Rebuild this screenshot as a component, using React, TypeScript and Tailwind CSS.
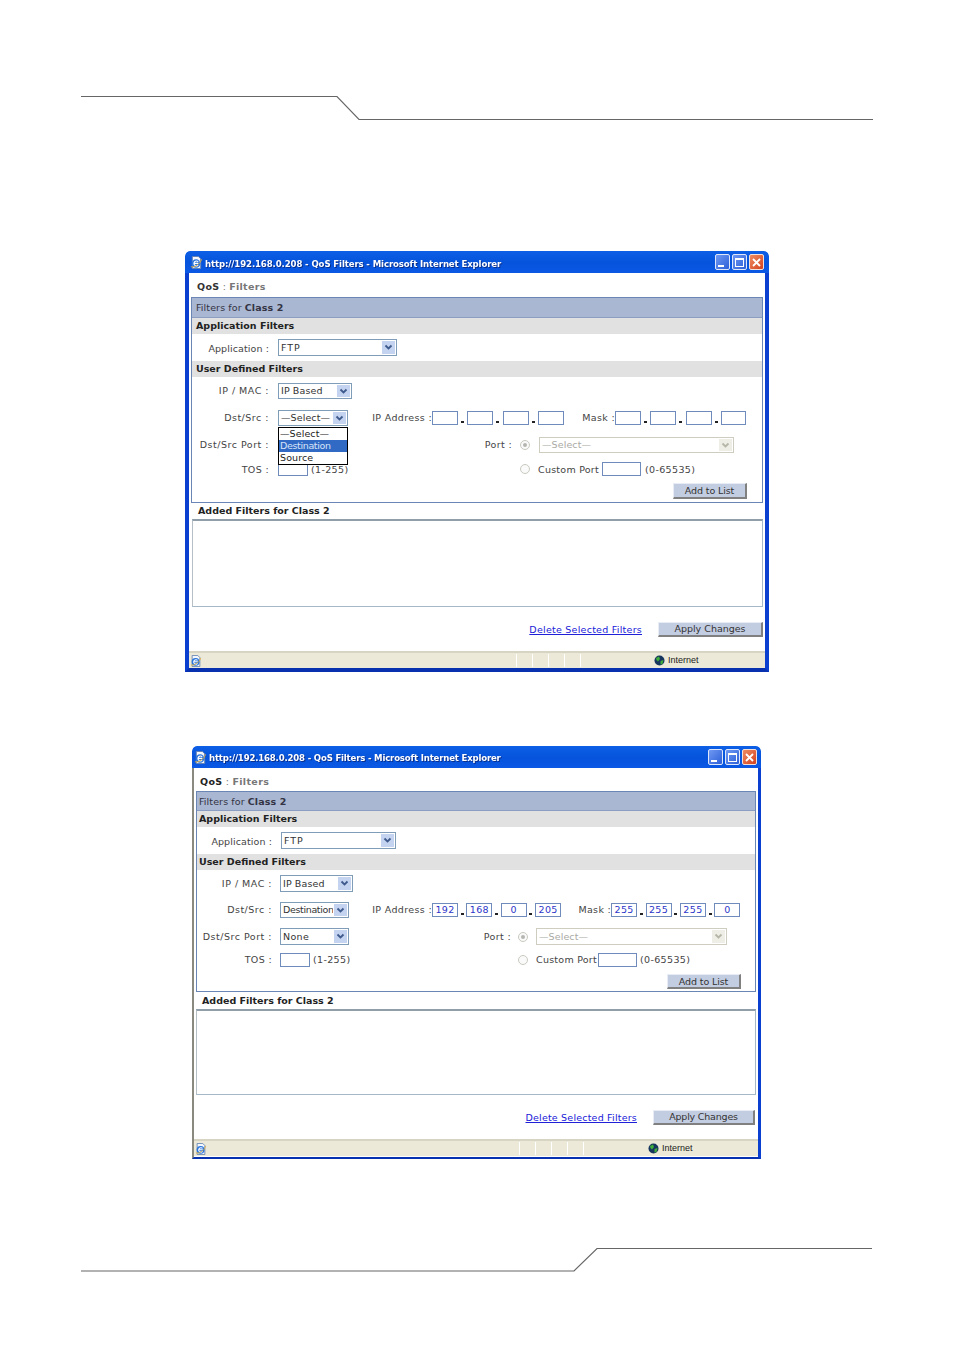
import type { ReactNode } from "react";

const font = "font-['DejaVu_Sans',sans-serif]";

function Arrow({ disabled }: { disabled?: boolean }) {
  return (
    <span className={`flex w-[13px] shrink-0 items-center justify-center self-stretch m-[1px] ${disabled ? "bg-[#eeeee6]" : "bg-[#c3d3f0]"}`}>
      <svg width="9" height="7" viewBox="0 0 9 7">
        <path d="M1.5 1.5 L4.5 4.5 L7.5 1.5" fill="none" stroke={disabled ? "#b5b5a8" : "#3f5a8c"} strokeWidth="1.8" />
      </svg>
    </span>
  );
}

function Sel({ value, className, disabled, textClass = "" }: { value: string; className: string; disabled?: boolean; textClass?: string }) {
  return (
    <span className={`flex items-center border bg-white ${disabled ? "border-[#cfcdc0] bg-[#f9f9f5] text-[#aaaaa5]" : "border-[#7f9db9] text-[#333]"} ${className}`}>
      <span className={`flex-1 pl-[2px] pt-[1px] whitespace-nowrap overflow-hidden ${textClass}`}>{value}</span>
      <Arrow disabled={disabled} />
    </span>
  );
}

function Box({ value, className }: { value?: string; className: string }) {
  return (
    <span className={`flex items-center justify-center border border-[#6f8bbb] bg-white pt-[1px] text-[#2b36c9] ${className}`}>{value}</span>
  );
}

function Label({ children, className }: { children: ReactNode; className: string }) {
  return <span className={`shrink-0 pt-[1px] text-right whitespace-nowrap text-[#444] ${className}`}>{children}</span>;
}

function Dot({ className }: { className: string }) {
  return (
    <span className={`flex shrink-0 items-end justify-center pb-[3px] self-stretch ${className}`}>
      <span className="block h-[2px] w-[3px] bg-[#222]" />
    </span>
  );
}

function Radio({ className, checked }: { className: string; checked?: boolean }) {
  return (
    <span className={`flex h-[10px] w-[10px] shrink-0 items-center justify-center rounded-full border border-[#c9c9c0] bg-[#fafafa] ${className}`}>
      {checked && <span className="block h-[4px] w-[4px] rounded-full bg-[#b5b5b0]" />}
    </span>
  );
}

function Btn({ children, className }: { children: ReactNode; className: string }) {
  return (
    <span className={`flex items-center justify-center bg-[#c3cde2] pt-[1px] text-[#333] border-b-2 border-r-2 border-b-[#808080] border-r-[#808080] border-t border-l border-t-[#e8ecf4] border-l-[#e8ecf4] ${className}`}>
      {children}
    </span>
  );
}

function Gray({ children, className }: { children: ReactNode; className: string }) {
  return <div className={`flex items-center bg-[#e1e1e1] pt-[1px] font-bold text-[#222] whitespace-nowrap ${className}`}>{children}</div>;
}

function IeIcon({ size }: { size: number }) {
  return (
    <svg width={size} height={size} viewBox="0 0 14 14" className="shrink-0">
      <path d="M2.5 0.5 H9 L11.5 3 V13.5 H2.5 Z" fill="#f4f7fc" stroke="#5f7eb0" />
      <circle cx="6.5" cy="8" r="4.6" fill="#2a74dc" />
      <path d="M4.2 8 H9 M8.8 6.3 A2.6 2.6 0 1 0 8.8 9.8" fill="none" stroke="#fff" strokeWidth="1.2" />
      <path d="M1 11.5 C4 13 11 9 12.5 3.5" fill="none" stroke="#e8b030" strokeWidth="0.9" />
    </svg>
  );
}

function Globe() {
  return (
    <svg width="11" height="11" viewBox="0 0 11 11" className="shrink-0">
      <circle cx="5.5" cy="5.5" r="5" fill="#16365f" />
      <path d="M2 3 L5 1.5 L6 4 L4 6.5 L2.5 5 Z M6.5 6 L9.5 5 L8.5 9 L6.5 9.5 Z" fill="#3fae3a" />
    </svg>
  );
}

function TitleBar({ title, className, btnMr, textClass }: { title: string; className: string; btnMr: string; textClass: string }) {
  return (
    <div className={`flex h-[22px] shrink-0 items-center rounded-t-[5px] bg-gradient-to-b from-[#0d5fe6] via-[#0654dc] to-[#0a58e4] ${className}`}>
      <IeIcon size={13} />
      <span className={`ml-[2px] flex-1 whitespace-nowrap font-bold font-stretch-condensed text-white [text-shadow:1px_1px_0_#0b2f8a] ${textClass}`}>{title}</span>
      <span className={`flex gap-[2px] ${btnMr}`}>
        <span className="flex h-[16px] w-[15px] items-end rounded-[2px] border border-[#dfe8fb] bg-gradient-to-br from-[#6f98f2] to-[#2d5fd8] p-[2px]">
          <span className="block h-[2px] w-[6px] bg-white" />
        </span>
        <span className="flex h-[16px] w-[15px] items-center justify-center rounded-[2px] border border-[#dfe8fb] bg-gradient-to-br from-[#6f98f2] to-[#2d5fd8]">
          <span className="block h-[9px] w-[9px] border border-t-2 border-white" />
        </span>
        <span className="flex h-[16px] w-[15px] items-center justify-center rounded-[2px] border border-[#f3e0d8] bg-gradient-to-br from-[#ee8a60] to-[#d2401c]">
          <svg width="9" height="9" viewBox="0 0 9 9">
            <path d="M1 1 L8 8 M8 1 L1 8" stroke="#fff" strokeWidth="1.8" />
          </svg>
        </span>
      </span>
    </div>
  );
}

function StatusBar({ gapClass, textClass }: { gapClass: string; textClass: string }) {
  return (
    <div className="flex h-[17px] shrink-0 items-center border-t-2 border-t-[#d8d4c4] bg-[#ece9d8] pl-[1px]">
      <IeIcon size={12} />
      <span className={`flex ${gapClass}`}>
        <span className="block h-[13px] w-[16px] border-l border-white" />
        <span className="block h-[13px] w-[16px] border-l border-white" />
        <span className="block h-[13px] w-[16px] border-l border-white" />
        <span className="block h-[13px] w-[16px] border-l border-white" />
        <span className="block h-[13px] w-[16px] border-l border-white" />
      </span>
      <span className={`flex items-center ${textClass}`}>
        <Globe />
        <span className="ml-[3px] text-[9px] text-[#222] font-['Liberation_Sans',sans-serif]">Internet</span>
      </span>
    </div>
  );
}

function ListBox({ className }: { className: string }) {
  return <div className={`shrink-0 border border-[#a5b8c8] border-t-2 border-t-[#8f9ea8] border-l-[#b5bfc5] bg-white ${className}`} />;
}

function FirstWindow() {
  const row = "flex text-[9.5px] tracking-[0.35px]";
  return (
    <div className={`ml-[185px] mt-[126px] flex h-[421px] w-[584px] flex-col overflow-hidden rounded-t-[5px] blur-[0.3px] ${font}`}>
      <TitleBar title="http://192.168.0.208 - QoS Filters - Microsoft Internet Explorer" className="pl-[5px]" btnMr="mr-[5px]" textClass="pt-[4px] text-[9.5px] tracking-[-0.1px]" />
      <div className="flex min-h-0 flex-1 flex-col border-x-4 border-b-4 border-x-[#0a3fd0] border-b-[#0831b0] bg-white">
        <div className="flex h-[24px] shrink-0 items-center pl-[8px] pt-[5px] text-[9.5px] tracking-[0.3px] text-[#777]">
          <b className="text-[#333]">QoS</b>&nbsp;: <b className="ml-[3px] font-bold">Filters</b>
        </div>
        <div className="mx-[2px] h-[206px] shrink-0 border border-[#6a86b5]">
          <div className="flex h-[20px] items-center bg-[#a9b7d2] pl-[4px] pt-[2px] text-[9.5px] tracking-[0.1px] text-[#334] border-b border-b-[#8b9dc0]">
            Filters for&nbsp;<b>Class 2</b>
          </div>
          <Gray className="h-[16px] pl-[4px] text-[9.5px]">Application Filters</Gray>
          <div className={`${row} h-[27px] items-start pt-[5px]`}>
            <Label className="w-[77px] leading-[17px] tracking-[0.1px]">Application :</Label>
            <Sel value="FTP" textClass="tracking-[1px]" className="ml-[9px] h-[17px] w-[119px]" />
          </div>
          <Gray className="h-[16px] pl-[4px] text-[9.5px]">User Defined Filters</Gray>
          <div className={`${row} mt-[6px] h-[16px] items-center`}>
            <Label className="w-[77px] tracking-[0.5px]">IP / MAC :</Label>
            <Sel value="IP Based" textClass="tracking-[0.1px]" className="ml-[9px] h-[16px] w-[74px]" />
          </div>
          <div className={`${row} mt-[11px] h-[16px] items-center`}>
            <div className="flex w-[177px] shrink-0 items-center">
              <Label className="w-[77px] tracking-[0.5px]">Dst/Src :</Label>
              <div className="relative ml-[9px]">
                <Sel value="—Select—" textClass="tracking-[0.1px]" className="h-[16px] w-[70px]" />
                <div className="absolute left-0 top-[17px] z-10 w-[70px] border border-black bg-white text-[9.5px] leading-[12px] text-[#222]">
                  <div className="pl-[1px] tracking-[0.1px]">—Select—</div>
                  <div className="bg-[#316ac5] pl-[1px] tracking-[-0.35px] text-[#d8e4f8]">Destination</div>
                  <div className="pl-[1px] tracking-[0.1px]">Source</div>
                </div>
              </div>
            </div>
            <Label className="w-[63px] text-left">IP Address :</Label>
            <Box className="h-[14px] w-[26px] shrink-0" />
            <Dot className="w-[9.33px]" />
            <Box className="h-[14px] w-[26px] shrink-0" />
            <Dot className="w-[9.33px]" />
            <Box className="h-[14px] w-[26px] shrink-0" />
            <Dot className="w-[9.33px]" />
            <Box className="h-[14px] w-[26px] shrink-0" />
            <Label className="ml-[15px] w-[36px] text-left">Mask :</Label>
            <Box className="h-[14px] w-[26px] shrink-0" />
            <Dot className="w-[9.33px]" />
            <Box className="h-[14px] w-[26px] shrink-0" />
            <Dot className="w-[9.33px]" />
            <Box className="h-[14px] w-[26px] shrink-0" />
            <Dot className="w-[9.33px]" />
            <Box className="h-[14px] w-[25px] shrink-0" />
          </div>
          <div className={`${row} mt-[11px] h-[16px] items-center`}>
            <div className="flex w-[179px] shrink-0 items-center">
              <Label className="w-[77px] tracking-[0.5px]">Dst/Src Port :</Label>
            </div>
            <Label className="w-[141px]">Port :</Label>
            <Radio checked className="ml-[8px]" />
            <Sel disabled value="—Select—" textClass="tracking-[0.1px]" className="ml-[9px] h-[16px] w-[195px]" />
          </div>
          <div className={`${row} mt-[9px] h-[14px] items-end`}>
            <div className="flex w-[179px] shrink-0 items-end">
              <Label className="w-[77px] leading-[12px]">TOS :</Label>
              <Box className="ml-[9px] h-[12px] w-[30px] shrink-0" />
              <span className="ml-[3px] pt-[1px] leading-[12px] whitespace-nowrap text-[#444]">(1-255)</span>
            </div>
            <span className="w-[141px] shrink-0" />
            <Radio className="mb-[2px] ml-[8px]" />
            <span className="ml-[8px] w-[64px] shrink-0 leading-[13px] whitespace-nowrap tracking-[0.25px] text-[#444]">Custom Port</span>
            <Box className="h-[14px] w-[39px] shrink-0" />
            <span className="ml-[4px] leading-[13px] whitespace-nowrap text-[#444]">(0-65535)</span>
          </div>
          <div className={`${row} mt-[7px] h-[16px] pl-[481px]`}>
            <Btn className="w-[74px] tracking-[-0.1px]"><span className="mt-[1px]">Add to List</span></Btn>
          </div>
        </div>
        <div className="flex h-[16px] shrink-0 items-center pl-[9px] pt-[1px] text-[9.5px] font-bold text-[#222]">Added Filters for Class 2</div>
        <ListBox className="ml-[3px] mr-[2px] h-[88px]" />
        <div className="flex h-[44px] shrink-0 items-start justify-end gap-[16px] pr-[2px] pt-[15px] text-[9.5px] tracking-[0.25px]">
          <span className="leading-[15px] text-[#2020d8] underline">Delete Selected Filters</span>
          <Btn className="h-[15px] w-[105px] tracking-[0px]">Apply Changes</Btn>
        </div>
        <StatusBar gapClass="ml-[314px]" textClass="ml-[58px]" />
      </div>
    </div>
  );
}

function SecondWindow() {
  const row = "flex text-[9.5px] tracking-[0.35px]";
  return (
    <div className={`ml-[192px] mt-[74px] flex h-[413px] w-[569px] flex-col overflow-hidden rounded-t-[5px] blur-[0.3px] ${font}`}>
      <TitleBar title="http://192.168.0.208 - QoS Filters - Microsoft Internet Explorer" className="pl-[2px]" btnMr="mr-[4px]" textClass="pt-[3px] text-[9.5px] tracking-[-0.17px]" />
      <div className="flex min-h-0 flex-1 flex-col border-l-2 border-r-[3px] border-b-2 border-l-[#8a8a80] border-r-[#0a3fd0] border-b-[#0831b0] bg-white">
        <div className="flex h-[23px] shrink-0 items-center pl-[6px] pt-[5px] text-[9.5px] tracking-[0.35px] text-[#777]">
          <b className="text-[#222]">QoS</b>&nbsp;: <b className="ml-[3px] font-bold">Filters</b>
        </div>
        <div className="mx-[2px] h-[201px] shrink-0 border border-[#6a86b5]">
          <div className="flex h-[19px] items-center bg-[#a9b7d2] pl-[2px] pt-[2px] text-[9.5px] tracking-[0.1px] text-[#334] border-b border-b-[#8b9dc0]">
            Filters for&nbsp;<b>Class 2</b>
          </div>
          <Gray className="h-[16px] pl-[2px] text-[9.5px]">Application Filters</Gray>
          <div className={`${row} h-[27px] items-start pt-[5px]`}>
            <Label className="w-[75px] leading-[17px] tracking-[0.1px]">Application :</Label>
            <Sel value="FTP" textClass="tracking-[1px]" className="ml-[9px] h-[17px] w-[115px]" />
          </div>
          <Gray className="h-[16px] pl-[2px] text-[9.5px]">User Defined Filters</Gray>
          <div className={`${row} mt-[5px] h-[17px] items-center`}>
            <Label className="w-[75px] tracking-[0.5px]">IP / MAC :</Label>
            <Sel value="IP Based" textClass="tracking-[0.1px]" className="ml-[8px] h-[17px] w-[73px]" />
          </div>
          <div className={`${row} mt-[10px] h-[16px] items-center`}>
            <div className="flex w-[175px] shrink-0 items-center">
              <Label className="w-[75px] tracking-[0.5px]">Dst/Src :</Label>
              <Sel value="Destination" textClass="tracking-[-0.35px]" className="ml-[8px] h-[16px] w-[69px]" />
            </div>
            <Label className="w-[60px] text-left">IP Address :</Label>
            <Box value="192" className="h-[14px] w-[26px] shrink-0" />
            <Dot className="w-[8.4px]" />
            <Box value="168" className="h-[14px] w-[26px] shrink-0" />
            <Dot className="w-[8.4px]" />
            <Box value="0" className="h-[14px] w-[26px] shrink-0" />
            <Dot className="w-[8.4px]" />
            <Box value="205" className="h-[14px] w-[26px] shrink-0" />
            <Label className="ml-[17px] w-[33px] text-left">Mask :</Label>
            <Box value="255" className="h-[14px] w-[26px] shrink-0" />
            <Dot className="w-[8.4px]" />
            <Box value="255" className="h-[14px] w-[26px] shrink-0" />
            <Dot className="w-[8.4px]" />
            <Box value="255" className="h-[14px] w-[26px] shrink-0" />
            <Dot className="w-[8.4px]" />
            <Box value="0" className="h-[14px] w-[26px] shrink-0" />
          </div>
          <div className={`${row} mt-[10px] h-[17px] items-center`}>
            <div className="flex w-[175px] shrink-0 items-center">
              <Label className="w-[75px] tracking-[0.5px]">Dst/Src Port :</Label>
              <Sel value="None" className="ml-[8px] h-[17px] w-[69px]" />
            </div>
            <Label className="w-[139px]">Port :</Label>
            <Radio checked className="ml-[7px]" />
            <Sel disabled value="—Select—" textClass="tracking-[0.1px]" className="ml-[8px] h-[17px] w-[191px]" />
          </div>
          <div className={`${row} mt-[8px] h-[14px] items-center`}>
            <div className="flex w-[175px] shrink-0 items-center">
              <Label className="w-[75px]">TOS :</Label>
              <Box className="ml-[8px] h-[14px] w-[30px] shrink-0" />
              <span className="ml-[3px] pt-[1px] whitespace-nowrap text-[#444]">(1-255)</span>
            </div>
            <span className="w-[139px] shrink-0" />
            <Radio className="ml-[7px]" />
            <span className="ml-[8px] w-[62px] shrink-0 pt-[1px] whitespace-nowrap tracking-[0.25px] text-[#444]">Custom Port</span>
            <Box className="h-[14px] w-[39px] shrink-0" />
            <span className="ml-[3px] pt-[1px] whitespace-nowrap text-[#444]">(0-65535)</span>
          </div>
          <div className={`${row} mt-[7px] h-[15px] pl-[470px]`}>
            <Btn className="w-[74px] tracking-[-0.1px]"><span className="mt-[1px]">Add to List</span></Btn>
          </div>
        </div>
        <div className="flex h-[17px] shrink-0 items-center pl-[8px] pt-[1px] text-[9.5px] font-bold text-[#222]">Added Filters for Class 2</div>
        <ListBox className="mx-[2px] h-[86px]" />
        <div className="flex h-[44px] shrink-0 items-start justify-end gap-[16px] pr-[3px] pt-[15px] text-[9.5px] tracking-[0.2px]">
          <span className="leading-[15px] text-[#2020d8] underline">Delete Selected Filters</span>
          <Btn className="h-[15px] w-[102px] tracking-[-0.2px]">Apply Changes</Btn>
        </div>
        <StatusBar gapClass="ml-[312px]" textClass="ml-[49px]" />
      </div>
    </div>
  );
}

export default function App() {
  return (
    <div className="h-[1351px] w-[954px] overflow-hidden bg-white">
      <svg width="954" height="125" viewBox="0 0 954 125" className="block">
        <path d="M81 96.5 H337 L359 119.5 H873" fill="none" stroke="#666" strokeWidth="1.2" />
      </svg>
      <FirstWindow />
      <SecondWindow />
      <svg width="954" height="40" viewBox="0 0 954 40" className="mt-[81px] block">
        <path d="M81 31 H574 L597 8.5 H872" fill="none" stroke="#666" strokeWidth="1.2" />
      </svg>
    </div>
  );
}
